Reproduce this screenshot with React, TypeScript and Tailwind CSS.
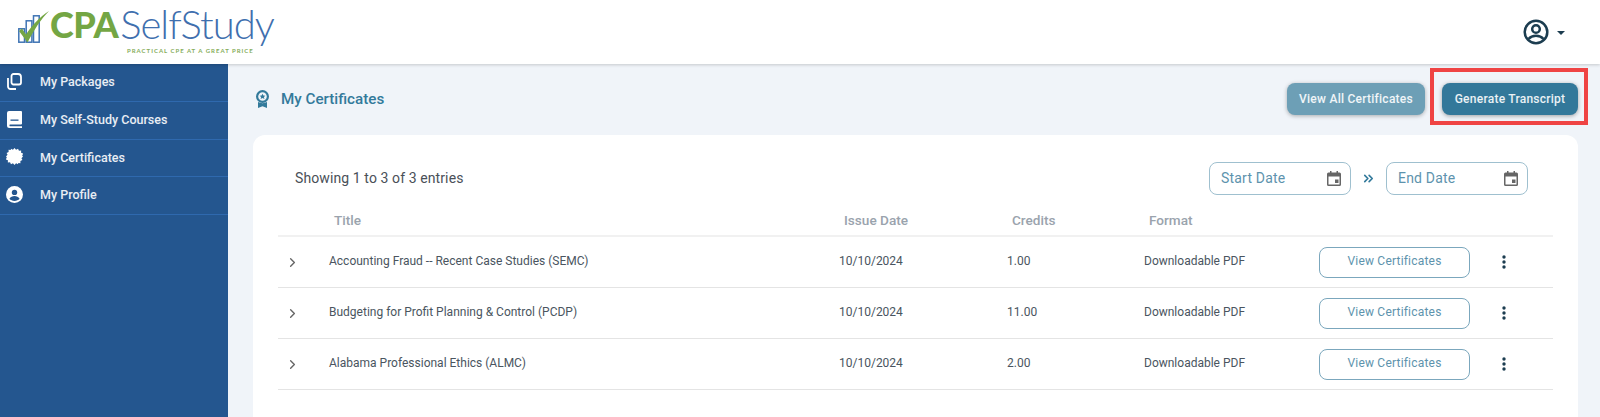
import { ChevronRight, ChevronsRight } from "lucide-react";

const roboto = "font-['Roboto',sans-serif]";

type Row = { title: string; date: string; credits: string; format: string };

const rows: Row[] = [
  { title: "Accounting Fraud -- Recent Case Studies (SEMC)", date: "10/10/2024", credits: "1.00", format: "Downloadable PDF" },
  { title: "Budgeting for Profit Planning & Control (PCDP)", date: "10/10/2024", credits: "11.00", format: "Downloadable PDF" },
  { title: "Alabama Professional Ethics (ALMC)", date: "10/10/2024", credits: "2.00", format: "Downloadable PDF" },
];

const CopyIcon = () => (
  <svg width="15" height="17" viewBox="0 0 15 17" fill="none" stroke="white" strokeWidth="1.800">
    <path d="M6.500 1h4.500a3 3 0 0 1 3 3v5.500a2 2 0 0 1-2 2H6.500a2 2 0 0 1-2-2V3a2 2 0 0 1 2-2z" />
    <path d="M1 5v8.500a2.500 2.500 0 0 0 2.500 2.500H9" />
  </svg>
);

const BookIcon = () => (
  <svg width="15" height="17" viewBox="0 0 15 17" fill="white">
    <path d="M2 0h12a1 1 0 0 1 1 1v11.500a1 1 0 0 1-1 1H3a1 1 0 0 0 0 1.800h12V17H2.500A2.500 2.500 0 0 1 0 14.500V2a2 2 0 0 1 2-2z" />
    <rect x="3.500" y="8.500" width="8" height="1.300" fill="#24568f" />
  </svg>
);

const SealIcon = () => (
  <svg width="17" height="17" viewBox="0 0 24 24" fill="white">
    <path d="M12 0l2.200 2.300L17 .9l1.300 2.900 3.100-.2-.1 3.100 2.900 1.200-1.400 2.800L24 12l-2.200 2.300 1.400 2.800-2.900 1.200.1 3.100-3.100-.2L17 23.100l-2.800-1.400L12 24l-2.200-2.300L7 23.100l-1.300-2.900-3.100.2.100-3.100-2.900-1.200 1.400-2.800L0 12l2.200-2.300L.8 6.900l2.900-1.200-.1-3.100 3.100.2L7 .9l2.800 1.400z" />
  </svg>
);

const ProfileIcon = () => (
  <svg width="17" height="17" viewBox="0 0 24 24">
    <circle cx="12" cy="12" r="12" fill="white" />
    <circle cx="12" cy="9" r="3.800" fill="#24568f" />
    <path d="M4.800 18c1.500-2.600 4.300-3.800 7.200-3.800s5.700 1.200 7.200 3.800c-1.800 2-4.300 3-7.200 3s-5.400-1-7.200-3z" fill="#24568f" />
  </svg>
);

const AccountIcon = () => (
  <svg width="26" height="26" viewBox="0 0 26 26" fill="none" stroke="#1c3d50" strokeWidth="2.500">
    <circle cx="13" cy="13" r="11.300" />
    <circle cx="13" cy="10" r="3.800" />
    <path d="M5.500 20c2-2.400 4.800-3.200 7.500-3.200s5.500.8 7.500 3.200" />
  </svg>
);

const RibbonIcon = () => (
  <svg width="15" height="18" viewBox="0 0 15 18" fill="none">
    <circle cx="7.500" cy="6.500" r="5.400" stroke="#337a9b" strokeWidth="2.200" />
    <path d="M7.500 3.800l.9 1.800 2 .2-1.500 1.300.5 2-1.900-1-1.900 1 .5-2-1.500-1.300 2-.2z" fill="#337a9b" />
    <path d="M3 12v6l4.500-1.800L12 18v-6c-2.700 1.500-6.300 1.500-9 0z" fill="#337a9b" />
  </svg>
);

const CalendarIcon = () => (
  <svg width="14" height="15" viewBox="0 0 14 15" fill="#666">
    <path d="M3 0h1.500v1.500h5V0H11v1.500h1.500A1.500 1.500 0 0 1 14 3v10.500a1.500 1.500 0 0 1-1.500 1.500h-11A1.500 1.500 0 0 1 0 13.500V3a1.500 1.500 0 0 1 1.500-1.500H3zM1.500 5.500v8h11v-8z" />
    <rect x="8" y="8.500" width="3.500" height="3.500" />
  </svg>
);

const DotsIcon = () => (
  <svg width="4" height="14" viewBox="0 0 4 14" fill="#1c3d50">
    <circle cx="2" cy="2" r="1.700" />
    <circle cx="2" cy="7" r="1.700" />
    <circle cx="2" cy="12" r="1.700" />
  </svg>
);

const LogoMark = () => (
  <svg width="32" height="34" viewBox="0 0 32 34" fill="none">
    <rect x="0.800" y="18.800" width="5.700" height="13.400" stroke="#3f74b4" strokeWidth="1.500" />
    <rect x="8.200" y="10.800" width="5.700" height="21.400" stroke="#3f74b4" strokeWidth="1.500" />
    <rect x="15.500" y="5.800" width="5.700" height="26.400" stroke="#3f74b4" strokeWidth="1.500" />
    <path d="M1 21l3-2.500 4 6C14 15 22 7 31 1 23 9 16 20 9.500 32.500z" fill="#74a644" />
  </svg>
);

const navItems = [
  { label: "My Packages", icon: <CopyIcon /> },
  { label: "My Self-Study Courses", icon: <BookIcon /> },
  { label: "My Certificates", icon: <SealIcon /> },
  { label: "My Profile", icon: <ProfileIcon /> },
];

const DateField = ({ label }: { label: string }) => (
  <div className="flex h-[33px] w-[142px] items-center justify-between rounded-lg border border-[#9fc0cf] pl-[11px] pr-[9px] text-[14px] tracking-[0.2px] text-[#5d93ad]">
    {label}
    <CalendarIcon />
  </div>
);

const gridCols = "grid grid-cols-[51px_510px_168px_137px_175px_151px_1fr]";

export default function App() {
  return (
    <div className={`${roboto} flex h-[417px] w-[1600px] flex-col overflow-hidden bg-[#f0f4f9]`}>
      <header className="z-10 flex h-[64px] shrink-0 items-center justify-between bg-white pl-[18px] pr-[35px] shadow-[0_1px_3px_rgba(0,0,0,0.18)]">
        <div className="flex items-start">
          <LogoMark />
          <div className="-mt-[2px] flex flex-col font-['Lato',sans-serif]">
            <div className="flex h-[32px] items-center">
              <span className="text-[36px] font-black leading-[32px] tracking-[-0.5px] text-[#74a644]">CPA</span>
              <span className="ml-[2px] text-[40px] font-light leading-[32px] tracking-[-1px] text-[#3f6fae]">SelfStudy</span>
            </div>
            <span className="mt-[7px] pl-[77px] text-[6px] font-bold leading-[8px] tracking-[1px] text-[#86ad5b]">PRACTICAL CPE AT A GREAT PRICE</span>
          </div>
        </div>
        <div className="flex items-center gap-[8px]">
          <AccountIcon />
          <span className="mt-[1px] border-x-[4.500px] border-t-[4.500px] border-x-transparent border-t-[#1c3d50]" />
        </div>
      </header>

      <div className="flex min-h-0 flex-1">
        <nav className="w-[228px] shrink-0 bg-[#24568f]">
          {navItems.map((item) => (
            <div key={item.label} className="flex h-[37.750px] items-center border-b border-[#2f69ae] text-[12.500px] font-medium text-white/90">
              <span className="flex w-[40px] justify-center pb-[2px] pr-[12px]">{item.icon}</span>
              {item.label}
            </div>
          ))}
        </nav>

        <main className="relative flex min-w-0 flex-1 flex-col pl-[25px] pr-[22px]">
          <div className="flex h-[71px] shrink-0 items-center justify-between pb-[2px]">
            <div className="mt-[1px] flex items-center gap-[11px] pl-[2px] text-[15.200px] font-medium text-[#337a9b]">
              <RibbonIcon />
              My Certificates
            </div>
            <div className="flex gap-[17px] text-[12px] font-medium tracking-[0.25px] text-white/90">
              <button className="h-[32px] w-[138px] rounded-lg bg-[#6d9fb6] shadow-[0_1px_4px_rgba(0,0,0,0.3)]">View All Certificates</button>
              <div className="relative">
                <button className="h-[32px] w-[136px] rounded-lg bg-[#33789a] shadow-[0_1px_4px_rgba(0,0,0,0.35)]">Generate Transcript</button>
                <div className="absolute -bottom-[10px] -left-[12px] -right-[10px] -top-[15px] border-[4px] border-[#ef4444]" />
              </div>
            </div>
          </div>

          <section className="flex-1 rounded-t-[12px] bg-white px-[25px] pt-[27px]">
            <div className="flex h-[33px] items-center justify-between pl-[17px] pr-[25px]">
              <span className="text-[14px] tracking-[0.1px] text-[#4a5058]">Showing 1 to 3 of 3 entries</span>
              <div className="flex items-center">
                <DateField label="Start Date" />
                <ChevronsRight className="mx-[10px] h-[15px] w-[15px] text-[#337a9b]" strokeWidth={2.600} />
                <DateField label="End Date" />
              </div>
            </div>

            <div className={`${gridCols} mt-[9px] h-[33px] items-center border-b-2 border-[#f1f1f1] pt-[2px] text-[13.600px] font-medium text-[#9aa3ad]`}>
              <span />
              <span className="pl-[5px]">Title</span>
              <span className="pl-[5px]">Issue Date</span>
              <span className="pl-[5px]">Credits</span>
              <span className="pl-[5px]">Format</span>
            </div>

            {rows.map((row) => (
              <div key={row.title} className={`${gridCols} h-[51px] items-center border-b border-[#e4e4e4] text-[12px] text-[#4a5560]`}>
                <ChevronRight className="ml-[7px] h-[15px] w-[15px] text-[#666]" strokeWidth={2.200} />
                <span className="pb-[2px]">{row.title}</span>
                <span className="pb-[2px]">{row.date}</span>
                <span className="pb-[2px]">{row.credits}</span>
                <span className="pb-[2px]">{row.format}</span>
                <button className="h-[31px] w-[151px] rounded-lg border border-[#7ba7bd] pb-[2px] text-[12px] tracking-[0.2px] text-[#5d93ad]">View Certificates</button>
                <span className="ml-[32px] flex pb-[1px]"><DotsIcon /></span>
              </div>
            ))}
          </section>
        </main>
      </div>
    </div>
  );
}
